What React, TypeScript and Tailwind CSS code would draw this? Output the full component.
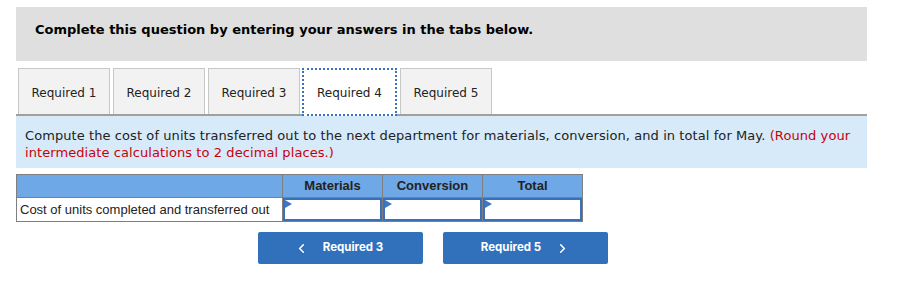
import { ChevronLeft, ChevronRight } from "lucide-react";

const tabs = ["Required 1", "Required 2", "Required 3", "Required 4", "Required 5"];
const columns = ["Materials", "Conversion", "Total"];

function InputCell() {
  return (
    <td className="p-0 border border-[#7f7f7f]">
      <div className="relative h-[23px] border-2 border-[#3a70b9] bg-white">
        <svg className="absolute left-0 top-0" width="7" height="8" viewBox="0 0 7 8">
          <path d="M0 0 L7 4 L0 8 Z" fill="#3a78c4" />
        </svg>
      </div>
    </td>
  );
}

export default function App() {
  return (
    <div className="w-[915px] h-[283px] bg-white pt-[7px] pl-4 font-['DejaVu_Sans',Verdana,sans-serif]">
      <div className="w-[851px] h-[54px] bg-[#dfdfdf] flex items-center pl-[19px] pb-[8px]">
        <span className="text-[13px] font-bold text-black">
          Complete this question by entering your answers in the tabs below.
        </span>
      </div>

      <div className="w-[851px] mt-[7px] flex items-end pl-[2px] gap-[3px] border-b-2 border-[#a0a0a0]">
        {tabs.map((t) =>
          t === "Required 4" ? (
            <div
              key={t}
              className="h-[48px] w-[95px] -mb-[2px] -ml-px bg-white border-2 border-dotted border-[#3a72c0] flex items-center justify-center pt-[2px] text-[12px] text-[#222]"
            >
              {t}
            </div>
          ) : (
            <div
              key={t}
              className="h-[46px] w-[92px] bg-[#f2f2f2] border border-b-0 border-[#c8c8c8] flex items-center justify-center pt-[2px] text-[12px] text-[#222]"
            >
              {t}
            </div>
          )
        )}
      </div>

      <div className="w-[851px] h-[52px] bg-[#d7eaf9] pl-[9px] pt-[11px] text-[13px] leading-[17px] tracking-[0.08px] text-[#222]">
        Compute the cost of units transferred out to the next department for materials, conversion, and in total for May.{" "}
        <span className="text-[#c8000a]">(Round your intermediate calculations to 2 decimal places.)</span>
      </div>

      <table className="mt-[6px] border-collapse font-['Liberation_Sans',Arial,sans-serif] text-[13px] text-[#222]">
        <thead>
          <tr className="bg-[#6fa8e6] h-[23px]">
            <th className="w-[266px] border border-[#7f7f7f]"></th>
            {columns.map((c) => (
              <th key={c} className="w-[100px] border border-[#7f7f7f] font-bold text-center">
                {c}
              </th>
            ))}
          </tr>
        </thead>
        <tbody>
          <tr>
            <td className="w-[266px] border border-[#7f7f7f] pl-[3px] pr-[4px] whitespace-nowrap leading-[15px]">
              Cost of units completed and transferred out
            </td>
            <InputCell />
            <InputCell />
            <InputCell />
          </tr>
        </tbody>
      </table>

      <div className="flex gap-5 pl-[242px] mt-[10px] font-['Inter',sans-serif]">
        <button className="w-[165px] h-[32px] rounded-[2px] bg-[#3171bc] text-white text-[11.5px] font-bold flex items-center justify-center gap-[14px] pr-[4px]">
          <ChevronLeft size={15} strokeWidth={2.5} />
          <span>Required 3</span>
        </button>
        <button className="w-[165px] h-[32px] rounded-[2px] bg-[#3171bc] text-white text-[11.5px] font-bold flex items-center justify-center gap-[14px]">
          <span>Required 5</span>
          <ChevronRight size={15} strokeWidth={2.5} />
        </button>
      </div>
    </div>
  );
}
